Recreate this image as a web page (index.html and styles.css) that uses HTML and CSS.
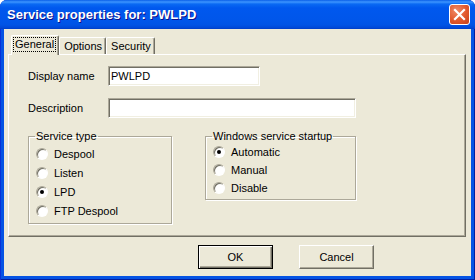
FILE: index.html
```html
<!DOCTYPE html>
<html lang="en">
<head>
    <meta charset="UTF-8">
    <title>Service properties for: PWLPD</title>
    <link rel="stylesheet" href="styles.css">
</head>
<body>
    <div class="window">
        <div class="titlebar">
            <span class="title">Service properties for: PWLPD</span>
            <button class="close" title="Close">
                <svg width="19" height="19" viewBox="0 0 19 19">
                    <path d="M5 5 L14 14 M14 5 L5 14" stroke="#fff" stroke-width="2.2" stroke-linecap="square"/>
                </svg>
            </button>
        </div>

        <div class="client">
            <div class="tabs">
                <div class="tab active"><span class="focus">General</span></div>
                <div class="tab">Options</div>
                <div class="tab">Security</div>
            </div>

            <div class="panel">
                <div class="field">
                    <label for="displayName">Display name</label>
                    <input type="text" id="displayName" class="short" value="PWLPD">
                </div>
                <div class="field">
                    <label for="description">Description</label>
                    <input type="text" id="description" class="long" value="">
                </div>

                <div class="groups">
                    <fieldset class="group service-type">
                        <legend>Service type</legend>
                        <label class="radio"><span class="dot"></span>Despool</label>
                        <label class="radio"><span class="dot"></span>Listen</label>
                        <label class="radio"><span class="dot checked"></span>LPD</label>
                        <label class="radio"><span class="dot"></span>FTP Despool</label>
                    </fieldset>

                    <fieldset class="group startup">
                        <legend>Windows service startup</legend>
                        <label class="radio"><span class="dot checked"></span>Automatic</label>
                        <label class="radio"><span class="dot"></span>Manual</label>
                        <label class="radio"><span class="dot"></span>Disable</label>
                    </fieldset>
                </div>
            </div>

            <div class="buttons">
                <button class="btn default">OK</button>
                <button class="btn">Cancel</button>
            </div>
        </div>
    </div>
</body>
</html>
```

FILE: styles.css
```css
* {
    margin: 0;
    padding: 0;
    box-sizing: border-box;
}

body {
    font-family: "Liberation Sans", Arial, sans-serif;
    font-size: 11px;
    color: #000;
    background: #fff;
}

.window {
    width: 475px;
    height: 280px;
    display: flex;
    flex-direction: column;
    background: #0553e4;
    border-radius: 7px 7px 0 0;
    overflow: hidden;
    box-shadow: inset 1px 0 #0831d9, inset -1px 0 #001ea0, inset 0 -1px #001ea0;
}

.titlebar {
    height: 29px;
    display: flex;
    align-items: center;
    padding: 0 5px 0 7px;
    color: white;
    background: linear-gradient(180deg, #0a5fe8 0px, #3d95ff 2px, #0a6af3 4px, #0058ee 8px, #0056ea 20px, #0053e5 25px, #0047d6 28px, #003bc2 29px);
}

.title {
    font-weight: bold;
    font-size: 13px;
    text-shadow: 1px 1px 0 #0f1089;
}

.close {
    margin-left: auto;
    width: 21px;
    height: 21px;
    border: 1px solid #fff;
    border-radius: 3px;
    background: radial-gradient(circle at 35% 30%, #f08a67 0%, #e1582c 55%, #c4411b 100%);
    display: flex;
    align-items: center;
    justify-content: center;
}

.client {
    flex: 1;
    margin: 0 4px 4px 4px;
    background: #ece9d8;
    display: flex;
    flex-direction: column;
    padding: 6px 5px 0 4px;
}

.tabs {
    display: flex;
    align-items: flex-end;
    padding-left: 3px;
}

.tab {
    position: relative;
    height: 17px;
    padding: 2px 3px 0 4px;
    border-top: 1px solid #fff;
    border-left: 1px solid #fff;
    border-right: 1px solid #716f64;
    border-radius: 2px 2px 0 0;
    box-shadow: inset -1px 0 #aca899;
    background: #ece9d8;
}

.tab.active {
    height: 20px;
    margin-bottom: -1px;
    padding: 1px 2px 0 1px;
    z-index: 1;
}

.focus {
    display: inline-block;
    padding: 1px 2px 2px 2px;
    outline: 1px dotted #000;
    outline-offset: -1px;
}

.panel {
    height: 183px;
    border-top: 1px solid #fff;
    border-left: 1px solid #fff;
    border-right: 1px solid #716f64;
    border-bottom: 1px solid #716f64;
    box-shadow: inset -1px -1px #aca899;
    padding: 11px 0 0 19px;
}

.field {
    display: flex;
    align-items: center;
    height: 20px;
    margin-bottom: 12px;
}

.field label {
    width: 80px;
}

.field input {
    height: 20px;
    font-family: "Liberation Sans", Arial, sans-serif;
    font-size: 11px;
    padding: 0 2px;
    background: #fff;
    border: 1px solid;
    border-color: #aca899 #fff #fff #aca899;
    box-shadow: inset 1px 1px #716f64, inset -1px -1px #f1efe2;
    outline: none;
}

.field input.short {
    width: 152px;
}

.field input.long {
    width: 248px;
}

.groups {
    display: flex;
    align-items: flex-start;
    gap: 33px;
    margin-top: 1px;
}

.group {
    border: 1px solid #aca899;
    box-shadow: 1px 1px 0 #fff, inset 1px 1px 0 #fff;
    padding: 0 6px 4px 7px;
}

.group legend {
    line-height: 13px;
    padding: 0 1px;
    margin-left: -1px;
}

.service-type {
    width: 144px;
    height: 94px;
    padding-top: 1px;
}

.startup {
    width: 151px;
    height: 70px;
}

.startup .radio {
    height: 18px;
}

.radio {
    display: flex;
    align-items: center;
    gap: 6px;
    height: 19px;
}

.dot {
    width: 12px;
    height: 12px;
    border-radius: 50%;
    background: radial-gradient(circle at 60% 60%, #fff 45%, #f1efe2 100%);
    border: 1px solid;
    border-color: #aca899 #fff #fff #aca899;
    box-shadow: inset 1px 1px 0 #716f64;
    position: relative;
}

.dot.checked::after {
    content: '';
    position: absolute;
    left: 3px;
    top: 3px;
    width: 4px;
    height: 4px;
    border-radius: 50%;
    background: #000;
}

.buttons {
    display: flex;
    gap: 26px;
    margin: 8px 0 0 0;
    padding-left: 190px;
}

.btn {
    width: 75px;
    height: 24px;
    font-family: "Liberation Sans", Arial, sans-serif;
    font-size: 11px;
    color: #000;
    background: #ece9d8;
    border: 1px solid;
    border-color: #fff #716f64 #716f64 #fff;
    box-shadow: inset -1px -1px #aca899;
}

.btn.default {
    border: 1px solid #000;
    box-shadow: inset 1px 1px #fff, inset -1px -1px #716f64, inset -2px -2px #aca899;
}
```
